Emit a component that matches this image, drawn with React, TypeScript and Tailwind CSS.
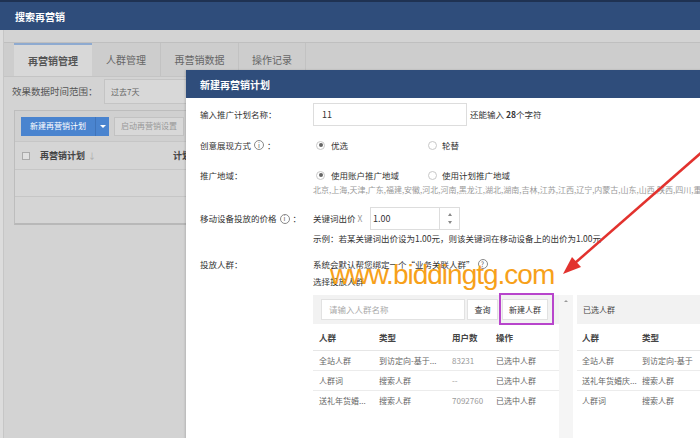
import React from "react";

const font = "font-['Noto_Sans_CJK_SC','Noto_Sans',sans-serif]";

const provinces =
  "北京,上海,天津,广东,福建,安徽,河北,河南,黑龙江,湖北,湖南,吉林,江苏,江西,辽宁,内蒙古,山东,山西,陕西,四川,重庆";

const available = [
  { name: "全站人群", type: "到访定向-基于...", users: "83231" },
  { name: "人群词", type: "搜索人群", users: "--" },
  { name: "送礼年货婚...", type: "搜索人群", users: "7092760" },
];

const selected = [
  { name: "全站人群", type: "到访定向-基于" },
  { name: "送礼年货婚庆...", type: "搜索人群" },
  { name: "人群词", type: "搜索人群" },
];

function Radio({ checked }: { checked?: boolean }) {
  return (
    <span className="w-[9px] h-[9px] rounded-full border border-[#c8c8c8] bg-white flex items-center justify-center">
      {checked && <span className="w-[4px] h-[4px] rounded-full bg-[#666]" />}
    </span>
  );
}

function Info() {
  return (
    <span className="inline-flex w-[10px] h-[10px] rounded-full border border-[#888] text-[7px] leading-none items-center justify-center text-[#666] mx-[3px]">
      i
    </span>
  );
}

function BackgroundPage() {
  return (
    <div className="flex flex-col h-full">
      {/* Top bar */}
      <div className="h-[30px] shrink-0 bg-[#2f4d7b] border-t-2 border-[#1f3252] flex items-center pl-[15px]">
        <span className="text-white text-[10px] font-bold">搜索再营销</span>
      </div>

      <div className="flex flex-1">
        <div className="w-[4px] bg-[#dcdcdc] border-r border-[#c6c6c6]" />
        <div className="flex-1 flex flex-col">
          {/* Tabs */}
          <div className="mt-[12px] h-[35px] bg-[#cdcdcd] border-t border-[#bfbfbf] border-b border-b-[#c4c4c4] flex pl-[10px]">
            <div className="w-[78px] bg-[#d8d8d8] border-t-2 border-[#8eaad0] flex items-center justify-center text-[10px] font-bold text-[#555]">
              再营销管理
            </div>
            <div className="w-[69px] border-r border-[#c2c2c2] flex items-center justify-center text-[10px] text-[#666]">
              人群管理
            </div>
            <div className="w-[78px] border-r border-[#c2c2c2] flex items-center justify-center text-[10px] text-[#666]">
              再营销数据
            </div>
            <div className="w-[67px] border-r border-[#c2c2c2] flex items-center justify-center text-[10px] text-[#666]">
              操作记录
            </div>
          </div>

          {/* Filter */}
          <div className="h-[27px] flex items-center pl-[8px] mt-[1px]">
            <span className="text-[9.5px] text-[#555] w-[92px]">效果数据时间范围：</span>
            <div className="h-[25px] w-[90px] border border-[#c4c4c4] bg-[#d8d8d8] flex items-center pl-[6px] text-[8px] text-[#666]">
              过去7天
            </div>
          </div>

          {/* Plan list panel */}
          <div className="mt-[5px] ml-[10px] border border-[#bdbdbd] border-b-2 border-b-[#b8b8b8] flex flex-col">
            <div className="h-[30px] bg-[#d0d0d0] flex items-center pl-[6px] gap-[5px]">
              <div className="flex h-[19px] bg-[#4a84cf]">
                <span className="w-[74px] flex items-center justify-center text-[8px] text-white">新建再营销计划</span>
                <span className="w-[14px] border-l border-[#3f74ba] flex items-center justify-center">
                  <span className="border-x-[3px] border-x-transparent border-t-[3px] border-t-white" />
                </span>
              </div>
              <div className="h-[19px] px-[6px] bg-[#d8d8d8] border border-[#c2c2c2] flex items-center text-[8px] text-[#999]">
                启动再营销设置
              </div>
            </div>
            <div className="h-[28px] bg-[#d5d5d5] border-t border-[#c6c6c6] flex items-center pl-[7px]">
              <span className="w-[8px] h-[8px] border border-[#aaa] bg-[#e0e0e0]" />
              <span className="ml-[10px] text-[9px] font-bold text-[#444]">再营销计划</span>
              <span className="ml-[3px] text-[8px] text-[#aaa]">↓</span>
              <span className="ml-[77px] text-[9px] font-bold text-[#444]">计划</span>
            </div>
            <div className="h-[27px] bg-[#d6d6d6] border-t border-[#c6c6c6]" />
            <div className="h-[27px] bg-[#d5d5d5] border-t border-[#c6c6c6]" />
          </div>
        </div>
      </div>
    </div>
  );
}

function Modal() {
  return (
    <div className="absolute left-[186px] top-[70px] w-[560px] h-[380px] bg-white shadow-[-1px_0_2px_rgba(0,0,0,0.15)] flex flex-col">
      <div className="h-[28px] shrink-0 bg-[#2f4d7b] flex items-center pl-[14px]">
        <span className="text-white text-[10px] font-bold">新建再营销计划</span>
      </div>

      <div className="flex flex-col text-[8.5px] text-[#333]">
        {/* Name */}
        <div className="flex mt-[5px] h-[23px]">
          <div className="w-[127px] shrink-0 pl-[14px] flex items-center">输入推广计划名称：</div>
          <div className="w-[154px] border border-[#ddd] flex items-center pl-[8px] text-[9px]">11</div>
          <div className="flex items-center ml-[3px]">
            还能输入 <span className="font-bold ml-[2px]">28</span>个字符
          </div>
        </div>

        {/* Creative */}
        <div className="flex mt-[10px] h-[18px] items-center">
          <div className="w-[127px] shrink-0 pl-[14px] flex items-center">
            创意展现方式 <Info />：
          </div>
          <div className="flex items-center w-[115px] pl-[3px] gap-[6px]">
            <Radio checked />
            <span>优选</span>
          </div>
          <div className="flex items-center gap-[5px]">
            <Radio />
            <span>轮替</span>
          </div>
        </div>

        {/* Region */}
        <div className="flex mt-[12px] items-start">
          <div className="w-[127px] shrink-0 pl-[14px] h-[18px] flex items-center">推广地域：</div>
          <div className="flex flex-col">
            <div className="flex h-[18px] items-center">
              <div className="flex items-center w-[115px] pl-[3px] gap-[6px]">
                <Radio checked />
                <span>使用账户推广地域</span>
              </div>
              <div className="flex items-center gap-[5px]">
                <Radio />
                <span>使用计划推广地域</span>
              </div>
            </div>
            <div className="h-[12px] flex items-center text-[8px] text-[#999] whitespace-nowrap">{provinces}</div>
          </div>
        </div>

        {/* Mobile price */}
        <div className="flex mt-[11px] items-start">
          <div className="w-[127px] shrink-0 pl-[14px] h-[23px] flex items-center">
            移动设备投放的价格 <Info />：
          </div>
          <div className="flex flex-col">
            <div className="flex h-[23px] items-center">
              <span className="w-[57px]">
                关键词出价 <span className="text-[#999]">X</span>
              </span>
              <div className="h-[23px] w-[70px] border border-[#ddd] flex items-center pl-[2px] text-[9px]">1.00</div>
              <div className="h-[23px] w-[20px] border border-l-0 border-[#ddd] flex flex-col items-center justify-center gap-[5px]">
                <span className="border-x-[2.5px] border-x-transparent border-b-[3px] border-b-[#888]" />
                <span className="border-x-[2.5px] border-x-transparent border-t-[3px] border-t-[#888]" />
              </div>
            </div>
            <div className="mt-[2px] h-[12px] flex items-center whitespace-nowrap">
              示例：若某关键词出价设为1.00元，则该关键词在移动设备上的出价为1.00元
            </div>
          </div>
        </div>

        {/* Crowds */}
        <div className="flex mt-[13px] items-start">
          <div className="w-[127px] shrink-0 pl-[14px] h-[14px] flex items-center">投放人群：</div>
          <div className="flex flex-col">
            <div className="h-[14px] flex items-center whitespace-nowrap">
              系统会默认帮您绑定一个“业务关联人群”
              <span className="ml-[3px] inline-flex w-[10px] h-[10px] rounded-full border border-[#888] text-[7px] leading-none items-center justify-center text-[#666]">
                ?
              </span>
            </div>
            <div className="mt-[4px] h-[12px] flex items-center">选择投放人群</div>

            <div className="mt-[8px] flex">
              {/* Available */}
              <div className="w-[246px] flex flex-col border-b border-[#e6e6e6]">
                <div className="h-[29px] bg-[#f2f2f2] flex items-center pl-[8px]">
                  <div className="w-[144px] h-[21px] bg-white border border-[#e2e2e2] flex items-center pl-[7px] text-[8.5px] text-[#aaa]">
                    请输入人群名称
                  </div>
                  <div className="ml-[2px] w-[31px] h-[21px] bg-white border border-[#e2e2e2] flex items-center justify-center text-[8px]">
                    查询
                  </div>
                  <div className="ml-[4px] w-[46px] h-[21px] bg-white border border-[#e2e2e2] flex items-center justify-center text-[8px]">
                    新建人群
                  </div>
                </div>
                <div className="h-[27px] flex items-center font-bold text-[8.5px] text-[#444] border-b border-[#e6e6e6]">
                  <span className="w-[66px] pl-[6px]">人群</span>
                  <span className="w-[73px]">类型</span>
                  <span className="w-[44px]">用户数</span>
                  <span>操作</span>
                </div>
                {available.map((r) => (
                  <div key={r.name} className="h-[20px] flex items-center text-[8px] text-[#666] border-b border-[#ececec] last:border-b-0">
                    <span className="w-[66px] pl-[6px]">{r.name}</span>
                    <span className="w-[73px]">{r.type}</span>
                    <span className="w-[44px] text-[#999]">{r.users}</span>
                    <span>已选中人群</span>
                  </div>
                ))}
              </div>

              {/* Scroll track */}
              <div className="w-[14px] h-[150px] bg-[#f5f5f5] flex justify-center pt-[5px]">
                <span className="border-x-[2px] border-x-transparent border-b-[2px] border-b-[#999] h-0" />
              </div>

              {/* Selected */}
              <div className="ml-[4px] w-[150px] flex flex-col border-b border-[#e6e6e6]">
                <div className="h-[29px] bg-[#f2f2f2] flex items-center pl-[6px] text-[8px] text-[#444]">已选人群</div>
                <div className="h-[27px] flex items-center font-bold text-[8.5px] text-[#444] border-b border-[#e6e6e6]">
                  <span className="w-[65px] pl-[5px]">人群</span>
                  <span>类型</span>
                </div>
                {selected.map((r) => (
                  <div key={r.name} className="h-[20px] flex items-center text-[8px] text-[#666] border-b border-[#ececec] last:border-b-0">
                    <span className="w-[65px] pl-[5px]">{r.name}</span>
                    <span>{r.type}</span>
                  </div>
                ))}
              </div>
            </div>
          </div>
        </div>
      </div>
    </div>
  );
}

export default function App() {
  return (
    <div className={`relative w-[700px] h-[438px] overflow-hidden bg-[#d3d3d3] ${font}`}>
      <BackgroundPage />
      <Modal />

      {/* Highlight around the new-crowd button */}
      <div className="absolute left-[499px] top-[293px] w-[55px] h-[32px] border-2 border-[#b845cc]" />

      {/* Watermark */}
      <div className="absolute left-[330px] top-[261px] text-[28px] leading-[28px] tracking-[-1px] text-[#f7a11a] font-['Liberation_Sans',Arial,sans-serif] whitespace-nowrap">
        www.biddingtg.com
      </div>

      {/* Red arrow */}
      <svg className="absolute left-0 top-0" width="700" height="438" viewBox="0 0 700 438">
        <line x1="710" y1="145" x2="575" y2="263" stroke="#e2322e" strokeWidth="2.5" />
        <polygon points="563,274 572,257 581,267" fill="#e2322e" />
      </svg>
    </div>
  );
}
